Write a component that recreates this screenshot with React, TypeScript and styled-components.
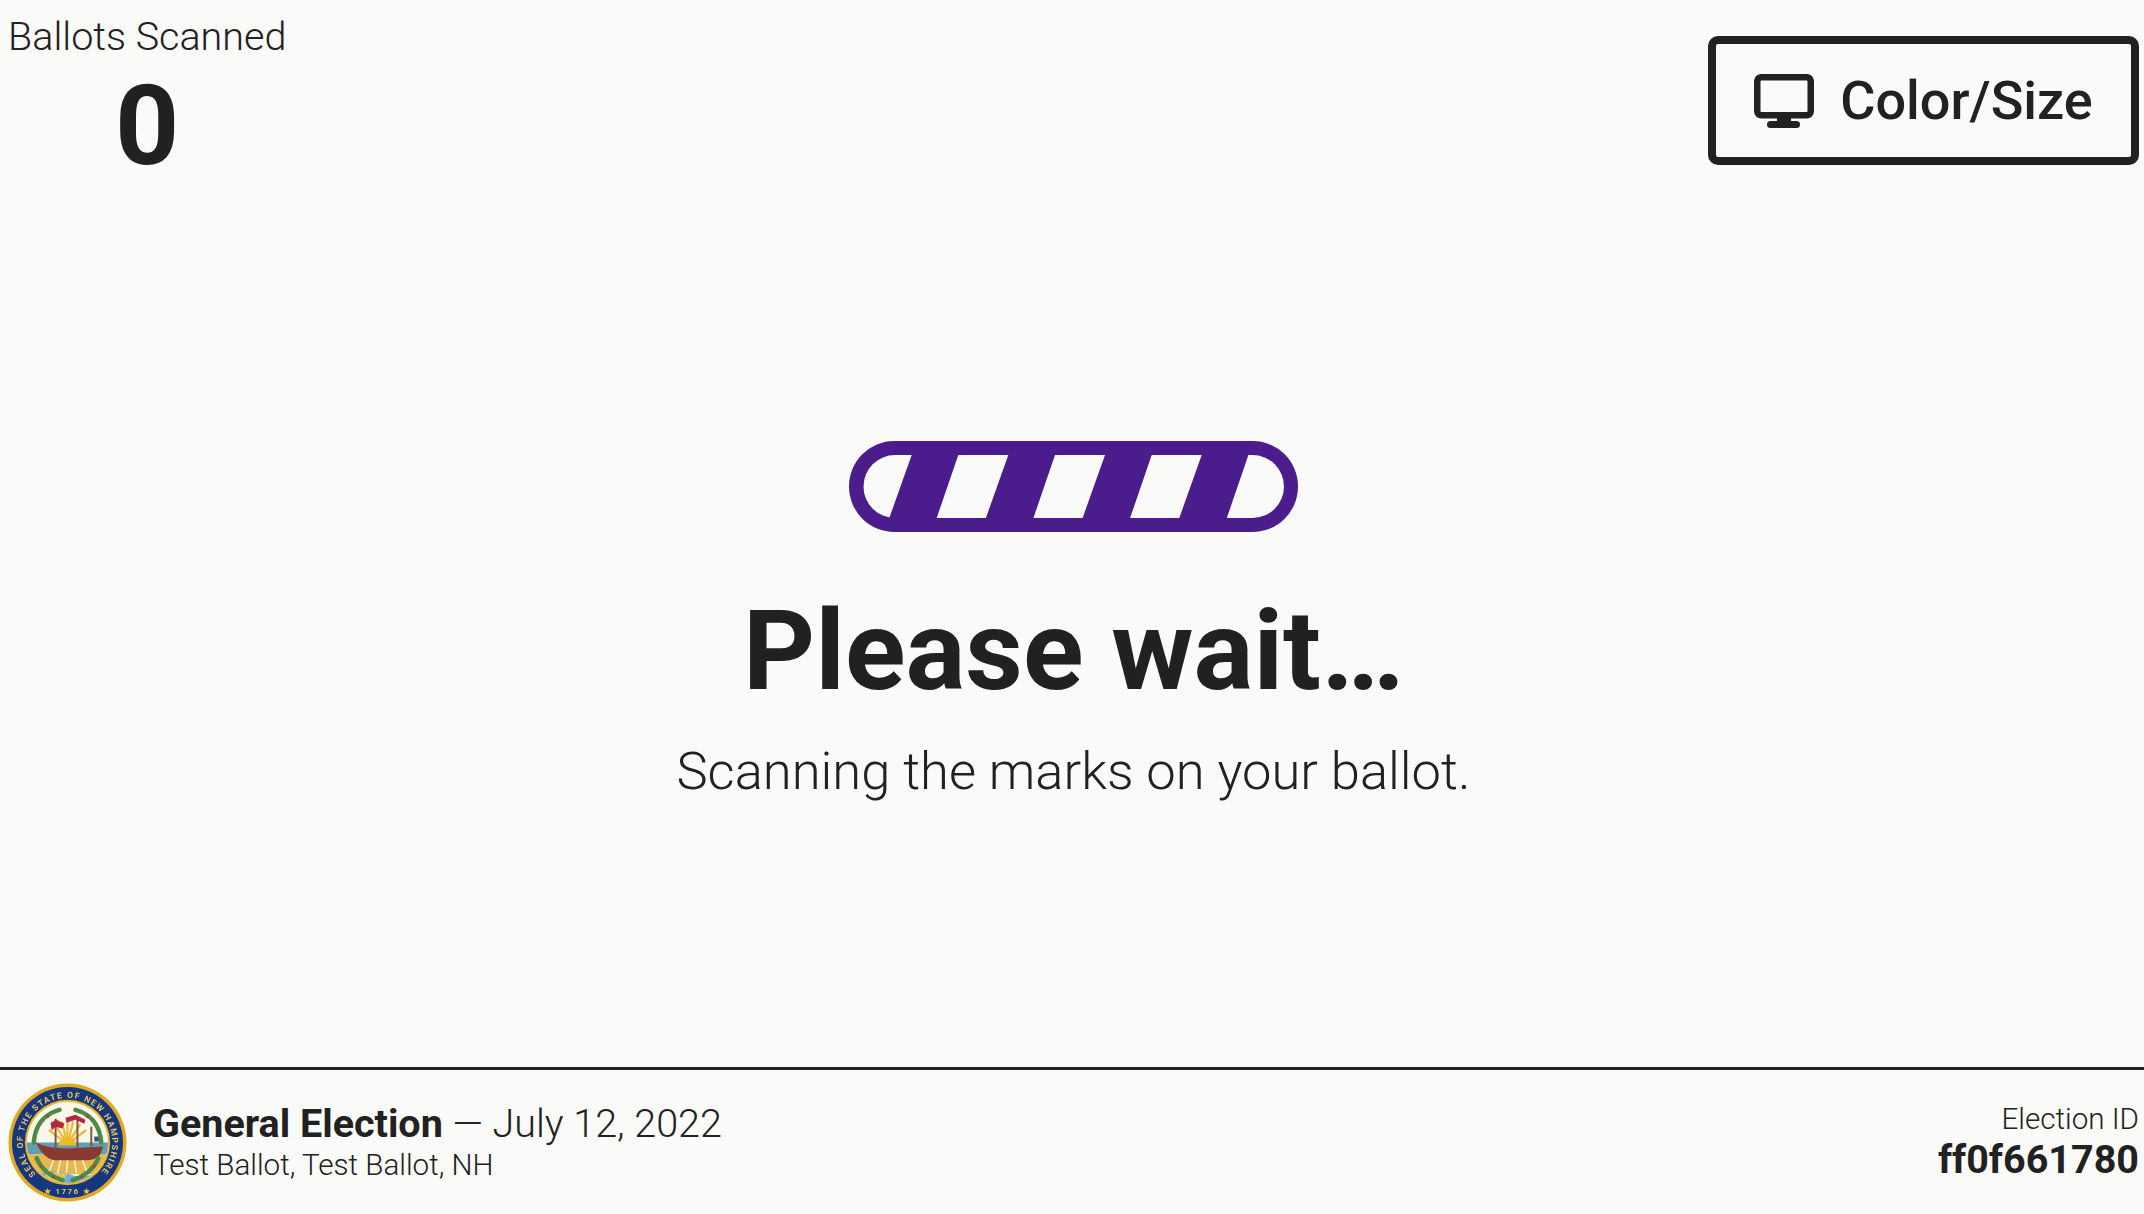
import React from 'react';
import styled, { createGlobalStyle } from 'styled-components';

const INK = '#212121';
const PURPLE = '#4a1c8c';

const App: React.FC = () => {
  return (
    <>
      <GlobalStyle />
      <Screen>
        <Header>
          <Counter>
            <CounterLabel>Ballots Scanned</CounterLabel>
            <CounterValue>0</CounterValue>
          </Counter>
          <SettingsButton type="button">
            <MonitorIcon />
            Color/Size
          </SettingsButton>
        </Header>
        <Main>
          <ProgressBar />
          <Title>Please wait…</Title>
          <Subtitle>Scanning the marks on your ballot.</Subtitle>
        </Main>
        <Footer>
          <ElectionInfo>
            <Seal />
            <ElectionText>
              <ElectionName>
                <strong>General Election</strong> — July 12, 2022
              </ElectionName>
              <ElectionPlace>Test Ballot, Test Ballot, NH</ElectionPlace>
            </ElectionText>
          </ElectionInfo>
          <ElectionId>
            <ElectionIdLabel>Election ID</ElectionIdLabel>
            <ElectionIdValue>ff0f661780</ElectionIdValue>
          </ElectionId>
        </Footer>
      </Screen>
    </>
  );
};

const MonitorIcon: React.FC = () => (
  <IconSvg viewBox="0 0 60 54" aria-hidden="true">
    <rect x="3.25" y="3.25" width="53.5" height="38" rx="4" fill="none" stroke={INK} strokeWidth="6.5" />
    <rect x="23" y="42" width="14" height="6" fill={INK} />
    <rect x="13" y="47" width="33" height="7" rx="3.5" fill={INK} />
  </IconSvg>
);

const ProgressBar: React.FC = () => (
  <BarSvg viewBox="0 0 449 91" role="img" aria-label="progress">
    <defs>
      <clipPath id="bar-inner">
        <rect x="14.5" y="14" width="420.5" height="63" rx="31.5" />
      </clipPath>
    </defs>
    <rect width="449" height="91" rx="45.5" fill={PURPLE} />
    <g clipPath="url(#bar-inner)" fill="#fafaf9">
      {[12.7, 109.3, 206, 302.7, 399.4].map((x) => (
        <polygon key={x} points={`${x},14 ${x + 50},14 ${x + 27.6},77 ${x - 21.6},77`} />
      ))}
    </g>
  </BarSvg>
);

const Seal: React.FC = () => (
  <SealSvg viewBox="0 0 120 120" aria-hidden="true">
    <defs>
      <path id="seal-ring" d="M 28.2 91.8 A 45 45 0 1 1 91.8 91.8" fill="none" />
      <clipPath id="seal-center">
        <circle cx="60" cy="60" r="41" />
      </clipPath>
    </defs>
    <circle cx="60" cy="60" r="59.5" fill="#e0a91e" />
    <circle cx="60" cy="60" r="56" fill="#16377f" />
    <circle cx="60" cy="60" r="43" fill="#e8b52a" />
    <circle cx="60" cy="60" r="41" fill="#fbf7ea" />
    <text fontFamily="Roboto, sans-serif" fontSize="8.6" fontWeight="700" fill="#e9c45a">
      <textPath href="#seal-ring" textLength="208" lengthAdjust="spacing">
        SEAL OF THE STATE OF NEW HAMPSHIRE
      </textPath>
    </text>
    <text x="60" y="112" textAnchor="middle" fontFamily="Roboto, sans-serif" fontSize="8" fontWeight="700" fill="#e9c45a" letterSpacing="1.4">
      ★ 1776 ★
    </text>
    <g clipPath="url(#seal-center)">
      <rect x="18" y="60" width="84" height="12" fill="#5f9fb4" />
      <rect x="18" y="72" width="84" height="20" fill="#e2b94a" />
      <path d="M30 92 Q48 86 62 92 T96 88 V104 H30 Z" fill="#6eaddc" />
      <path d="M38 92 Q50 88 60 92 Q54 98 58 104 H38 Z" fill="#e7c25a" />
      {[-52, -32, -14, 0, 14, 32, 52].map((a) => (
        <rect key={a} x="58.9" y="38" width="2.2" height="18" fill="#eeb92e" transform={`rotate(${a} 60 62)`} />
      ))}
      <path d="M51 63 A9 9 0 0 1 69 63 Z" fill="#f0b92a" />
      <path d="M28 60 Q40 66 60 66 L96 64 L93 72 Q88 78 78 78 H46 Q36 76 28 60 Z" fill="#8a3a30" />
      <path d="M46 78 L41 90 M53 78 L50 91 M60 78 L59 91 M67 78 L69 91 M75 78 L80 90" stroke="#f4ede0" strokeWidth="1.6" />
      <path d="M48 36 V66 M70 34 V66 M84 44 V64" stroke="#7b5a45" strokeWidth="2" fill="none" />
      <path d="M43 40 L49 37 L57 41 L55 46 L48 44 L44 48 Z" fill="#b5273a" />
      <path d="M58 35 L68 32 L78 37 L77 41 L68 37 L59 40 Z" fill="#b5273a" />
      <rect x="87" y="54" width="8" height="5" fill="#3d4f86" />
    </g>
    <g fill="none" stroke="#4c8a46" strokeWidth="4.5" strokeDasharray="7 2.5" strokeLinecap="round">
      <path d="M52 27 Q28 34 26 60" />
      <path d="M68 27 Q92 34 94 60" />
      <path d="M29 76 Q36 92 55 98" />
      <path d="M91 76 Q84 92 65 98" />
    </g>
    <g fill="#c3353f">
      <circle cx="40" cy="34" r="1.4" />
      <circle cx="80" cy="34" r="1.4" />
      <circle cx="33" cy="84" r="1.4" />
      <circle cx="87" cy="84" r="1.4" />
      <circle cx="46" cy="95" r="1.4" />
      <circle cx="74" cy="95" r="1.4" />
    </g>
  </SealSvg>
);

const GlobalStyle = createGlobalStyle`
  html, body {
    margin: 0;
    padding: 0;
    background: #fafaf9;
  }

  * {
    box-sizing: border-box;
  }
`;

const Screen = styled.div`
  display: flex;
  flex-direction: column;
  width: 2144px;
  height: 1214px;
  overflow: hidden;
  background: #fafaf9;
  color: ${INK};
  font-family: Roboto, 'Liberation Sans', sans-serif;
`;

const Header = styled.header`
  display: flex;
  justify-content: space-between;
  align-items: flex-start;
  padding: 14px 5px 0 8px;
`;

const Counter = styled.div`
  display: flex;
  flex-direction: column;
  align-items: center;
`;

const CounterLabel = styled.div`
  font-size: 39.5px;
  font-weight: 300;
  line-height: 46px;
`;

const CounterValue = styled.div`
  margin-top: 7px;
  font-size: 112px;
  font-weight: 700;
  line-height: 118px;
`;

const SettingsButton = styled.button`
  display: flex;
  align-items: center;
  justify-content: center;
  gap: 26px;
  width: 431px;
  height: 129px;
  margin-top: 22px;
  padding: 0;
  border: 8px solid ${INK};
  border-radius: 10px;
  background: transparent;
  color: ${INK};
  font-family: inherit;
  font-size: 54px;
  font-weight: 500;
`;

const IconSvg = styled.svg`
  width: 60px;
  height: 54px;
`;

const Main = styled.main`
  display: flex;
  flex: 1;
  flex-direction: column;
  align-items: center;
  justify-content: flex-start;
  padding: 256px 0 0 3px;
`;

const BarSvg = styled.svg`
  display: block;
  width: 449px;
  height: 91px;
`;

const Title = styled.h1`
  margin: 54px 0 0;
  font-size: 112px;
  font-weight: 700;
  line-height: 130px;
`;

const Subtitle = styled.p`
  margin: 24px 0 0;
  font-size: 52.5px;
  font-weight: 300;
  line-height: 62px;
`;

const Footer = styled.footer`
  display: flex;
  justify-content: space-between;
  align-items: center;
  height: 147px;
  padding: 0 5px 0 8px;
  border-top: 3px solid ${INK};
`;

const ElectionInfo = styled.div`
  display: flex;
  align-items: center;
  gap: 26px;
`;

const SealSvg = styled.svg`
  width: 119px;
  height: 119px;
  filter: blur(0.5px);
`;

const ElectionText = styled.div`
  display: flex;
  flex-direction: column;
`;

const ElectionName = styled.div`
  font-size: 39.5px;
  font-weight: 300;
  line-height: 46px;

  strong {
    font-weight: 700;
  }
`;

const ElectionPlace = styled.div`
  font-size: 29.6px;
  font-weight: 300;
  line-height: 36px;
`;

const ElectionId = styled.div`
  display: flex;
  flex-direction: column;
  align-items: flex-end;
`;

const ElectionIdLabel = styled.div`
  font-size: 29.6px;
  font-weight: 300;
  line-height: 36px;
`;

const ElectionIdValue = styled.div`
  font-size: 39.5px;
  font-weight: 700;
  line-height: 46px;
`;

export default App;
